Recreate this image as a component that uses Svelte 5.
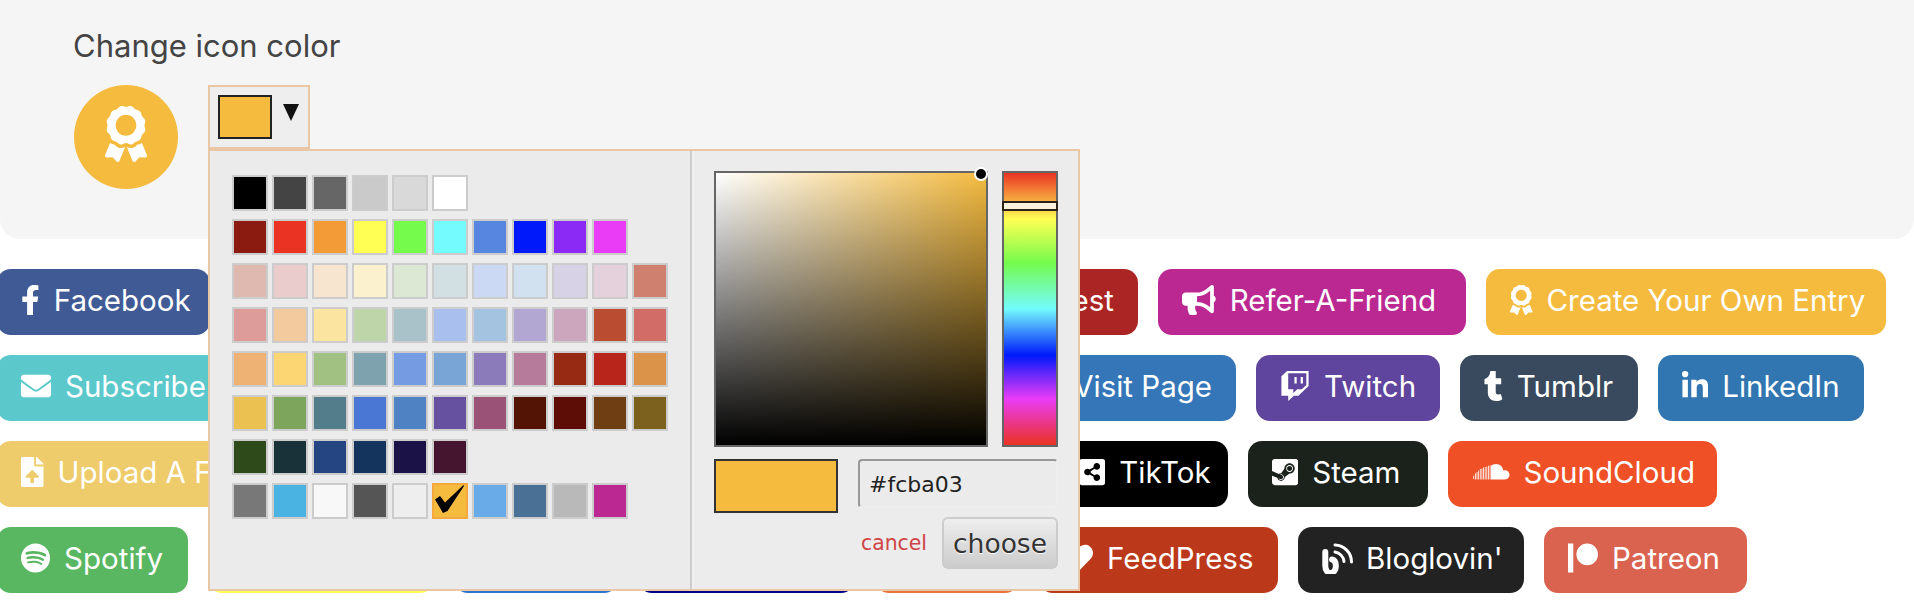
<script lang="ts">
	const award = { box: '0 0 384 512', d: 'M97.12 362.63c-8.69-8.69-4.16-6.24-25.12-11.85-9.51-2.55-17.87-7.45-25.43-13.32L1.2 448.7c-4.39 10.77 3.81 22.47 15.43 22.03l52.69-2.01L105.56 507c8 8.44 22.04 5.81 26.43-4.96l52.05-127.62c-10.84 6.04-22.87 9.58-35.31 9.58-19.5 0-37.82-7.59-51.61-21.37zM382.8 448.7l-45.37-111.24c-7.56 5.88-15.92 10.77-25.43 13.32-21.07 5.64-16.45 3.18-25.12 11.85-13.79 13.78-32.12 21.37-51.62 21.37-12.44 0-24.47-3.55-35.31-9.58L252 502.04c4.39 10.77 18.44 13.4 26.43 4.96l36.25-38.28 52.69 2.01c11.62.44 19.82-11.27 15.43-22.03zM263 340c15.28-15.55 17.03-14.21 38.79-20.14 13.89-3.79 24.75-14.84 28.47-28.98 7.48-28.4 5.54-24.97 25.95-45.75 10.17-10.35 14.14-25.44 10.42-39.58-7.47-28.38-7.48-24.42 0-52.83 3.72-14.14-.25-29.23-10.42-39.58-20.41-20.78-18.47-17.36-25.95-45.75-3.72-14.14-14.58-25.19-28.47-28.98-27.88-7.61-24.52-5.62-44.95-26.41-10.17-10.35-25-14.4-38.89-10.61-27.87 7.6-23.98 7.61-51.9 0-13.89-3.79-28.72.25-38.89 10.61-20.41 20.78-17.05 18.8-44.94 26.41-13.89 3.79-24.75 14.84-28.47 28.98-7.47 28.39-5.54 24.97-25.95 45.75-10.17 10.35-14.15 25.44-10.42 39.58 7.47 28.36 7.48 24.4 0 52.82-3.72 14.14.25 29.23 10.42 39.59 20.41 20.78 18.47 17.35 25.95 45.75 3.72 14.14 14.58 25.19 28.47 28.98C104.6 325.96 106.27 325 121 340c13.23 13.47 33.84 15.88 49.74 5.82a39.676 39.676 0 0 1 42.53 0c15.89 10.06 36.5 7.65 49.73-5.82zM97.66 175.96c0-53.03 42.24-96.02 94.34-96.02s94.34 42.99 94.34 96.02-42.24 96.02-94.34 96.02-94.34-42.99-94.34-96.02z' };

	const icons: Record<string, { box: string; d: string }> = {
		award,
		facebook: { box: '0 0 320 512', d: 'M279.14 288l14.22-92.66h-88.91v-60.13c0-25.35 12.42-50.06 52.24-50.06h40.42V6.26S260.43 0 225.36 0c-73.22 0-121.08 44.38-121.08 124.72v70.62H22.89V288h81.39v224h100.17V288z' },
		envelope: { box: '0 0 512 512', d: 'M502.3 190.8c3.9-3.1 9.7-.2 9.7 4.7V400c0 26.5-21.5 48-48 48H48c-26.5 0-48-21.5-48-48V195.6c0-5 5.7-7.8 9.7-4.7 22.4 17.4 52.1 39.5 154.1 113.6 21.1 15.4 56.7 47.8 92.2 47.6 35.7.3 72-32.8 92.3-47.6 102-74.1 131.6-96.3 154-113.7zM256 320c23.2.4 56.6-29.2 73.4-41.4 132.7-96.3 142.8-104.7 173.4-128.7 5.8-4.5 9.2-11.5 9.2-18.9v-19c0-26.5-21.5-48-48-48H48C21.5 64 0 85.5 0 112v19c0 7.4 3.4 14.3 9.2 18.9 30.6 23.9 40.7 32.4 173.4 128.7 16.8 12.2 50.2 41.8 73.4 41.4z' },
		upload: { box: '0 0 384 512', d: 'M224 136V0H24C10.7 0 0 10.7 0 24v464c0 13.3 10.7 24 24 24h336c13.3 0 24-10.7 24-24V160H248c-13.2 0-24-10.8-24-24zm65.18 216.01H224v80c0 8.84-7.16 16-16 16h-32c-8.84 0-16-7.16-16-16v-80H94.82c-14.28 0-21.41-17.29-11.27-27.36l96.42-95.7c6.65-6.61 17.39-6.61 24.04 0l96.42 95.7c10.15 10.07 3.03 27.36-11.25 27.36zM377 105L279.1 7c-4.5-4.5-10.6-7-17-7H256v128h128v-6.1c0-6.3-2.5-12.4-7-16.9z' },
		spotify: { box: '0 0 496 512', d: 'M248 8C111.1 8 0 119.1 0 256s111.1 248 248 248 248-111.1 248-248S384.9 8 248 8zm100.7 364.9c-4.2 0-6.8-1.3-10.7-3.6-62.4-37.6-135-39.2-206.7-24.5-3.9 1-9 2.6-11.9 2.6-9.7 0-15.8-7.7-15.8-15.8 0-10.3 6.1-15.2 13.6-16.8 81.9-18.1 165.6-16.5 237 26.2 6.1 3.9 9.7 7.4 9.7 16.5s-7.1 15.4-15.2 15.4zm26.9-65.6c-5.2 0-8.7-2.3-12.3-4.2-62.5-37-155.7-51.9-238.6-29.4-4.8 1.3-7.4 2.6-11.9 2.6-10.7 0-19.4-8.7-19.4-19.4s5.2-17.8 15.5-20.7c27.8-7.8 56.2-13.6 97.8-13.6 64.9 0 127.6 16.1 177 45.5 8.1 4.8 11.3 11 11.3 19.7-.1 10.8-8.5 19.5-19.4 19.5zm31-76.2c-5.2 0-8.4-1.3-12.9-3.9-71.2-42.5-198.5-52.7-280.9-29.7-3.6 1-8.1 2.6-12.9 2.6-13.2 0-23.3-10.3-23.3-23.6 0-13.6 8.4-21.3 17.4-23.9 35.2-10.3 74.6-15.2 117.5-15.2 73 0 149.5 15.2 205.4 47.8 7.8 4.5 12.9 10.7 12.9 22.6 0 13.6-11 23.3-23.2 23.3z' },
		bullhorn: { box: '0 0 576 512', d: 'M576 240c0-23.63-12.95-44.04-32-55.12V32.01C544 23.26 537.02 0 512 0c-7.12 0-14.19 2.38-19.98 7.02l-85.03 68.03C364.28 109.19 310.66 128 256 128H64c-35.35 0-64 28.65-64 64v96c0 35.35 28.65 64 64 64h33.7c-1.39 10.48-2.18 21.14-2.18 32 0 39.77 9.26 77.35 25.56 110.94 5.19 10.69 16.52 17.06 28.4 17.06h74.28c26.05 0 41.69-29.84 25.9-50.56-16.4-21.52-26.15-48.36-26.15-77.44 0-11.11 1.62-21.79 4.41-32H256c54.66 0 108.28 18.81 150.98 52.95l85.03 68.03a32.023 32.023 0 0 0 19.98 7.02c24.92 0 32-22.78 32-32V295.13C563.05 284.04 576 263.63 576 240zm-96 141.42l-33.05-26.44C392.95 311.78 325.12 288 256 288v-96c69.12 0 136.95-23.78 190.95-66.98L480 98.58v282.84z' },
		twitch: { box: '0 0 512 512', d: 'M391.17,103.47H352.54v109.7h38.63ZM285,103H246.37V212.75H285ZM120.83,0,24.31,91.42V420.58H140.14V512l96.53-91.42h77.25L487.69,256V0ZM449.07,237.75l-77.22,73.12H294.61l-67.6,64v-64H140.14V36.58H449.07Z' },
		tumblr: { box: '0 0 320 512', d: 'M309.8 480.3c-13.6 14.5-50 31.7-97.4 31.7-120.8 0-147-88.8-147-140.6v-144H17.9c-5.5 0-10-4.5-10-10v-68c0-7.2 4.5-13.6 11.3-16 62-21.8 81.5-76 84.3-117.1.8-11 6.5-16.3 16.1-16.3h70.9c5.5 0 10 4.5 10 10v115.2h83c5.5 0 10 4.4 10 9.9v81.7c0 5.5-4.5 10-10 10h-83.4V360c0 34.2 23.7 53.6 68 35.8 4.8-1.9 9-3.2 12.7-2.2 3.5.9 5.8 3.4 7.4 7.9l22 64.3c1.8 5 3.3 10.6-.4 14.5z' },
		linkedin: { box: '0 0 448 512', d: 'M100.28 448H7.4V148.9h92.88zM53.79 108.1C24.09 108.1 0 83.5 0 53.8a53.79 53.79 0 0 1 107.58 0c0 29.7-24.1 54.3-53.79 54.3zM447.9 448h-92.68V302.4c0-34.7-.7-79.2-48.29-79.2-48.29 0-55.69 37.7-55.69 76.7V448h-92.78V148.9h89.08v40.8h1.3c12.4-23.5 42.69-48.3 87.88-48.3 94 0 111.28 61.9 111.28 142.3V448z' },
		share: { box: '0 0 448 512', d: 'M448 80v352c0 26.51-21.49 48-48 48H48c-26.51 0-48-21.49-48-48V80c0-26.51 21.49-48 48-48h352c26.51 0 48 21.49 48 48zM304 296c-14.562 0-27.823 5.561-37.783 14.671l-67.958-40.775a56.339 56.339 0 0 0 0-27.793l67.958-40.775C276.177 210.439 289.438 216 304 216c30.928 0 56-25.072 56-56s-25.072-56-56-56-56 25.072-56 56c0 4.797.605 9.453 1.74 13.897l-67.958 40.775C171.823 205.561 158.562 200 144 200c-30.928 0-56 25.072-56 56s25.072 56 56 56c14.562 0 27.823-5.561 37.783-14.671l67.958 40.775a56.088 56.088 0 0 0-1.74 13.897c0 30.928 25.072 56 56 56s56-25.072 56-56C360 321.072 334.928 296 304 296z' },
		steam: { box: '0 0 448 512', d: 'M185.2 356.5c7.7-18.5-1-39.7-19.6-47.4l-29.5-12.2c11.4-4.3 24.3-4.5 36.4.5 12.2 5.1 21.6 14.6 26.7 26.7 5 12.2 5 25.6-.1 37.7-10.5 25.1-39.4 37-64.6 26.5-11.6-4.8-20.4-13.6-25.4-24.2l28.5 11.8c18.6 7.8 39.9-.9 47.6-19.4zM400 32H48C21.5 32 0 53.5 0 80v160.7l116.6 48.1c12-8.2 26.2-12.1 40.7-11.3l55.4-80.2v-1.1c0-48.2 39.3-87.5 87.6-87.5s87.6 39.3 87.6 87.5c0 49.2-40.9 88.7-89.6 87.5l-79 56.3c1.6 38.5-29.1 68.8-65.7 68.8-31.8 0-58.5-22.7-64.5-52.7L0 319.2V432c0 26.5 21.5 48 48 48h352c26.5 0 48-21.5 48-48V80c0-26.5-21.5-48-48-48zm-99.7 222.5c-32.2 0-58.4-26.1-58.4-58.3s26.2-58.3 58.4-58.3 58.4 26.2 58.4 58.3-26.2 58.3-58.4 58.3zm.1-14.6c24.2 0 43.9-19.6 43.9-43.8 0-24.2-19.6-43.8-43.9-43.8-24.2 0-43.9 19.6-43.9 43.8 0 24.2 19.7 43.8 43.9 43.8z' },
		soundcloud: { box: '0 0 640 512', d: 'M325 384V150C345 130 375 118 410 118C475 118 525 165 535 230C545 226 555 224 565 224C606 224 640 258 640 304C640 348 606 384 565 384ZM22 320h14v54h-14zM50 276h14v108h-14zM78 254h14v130h-14zM106 232h14v152h-14zM134 206h14v178h-14zM162 196h14v188h-14zM190 178h14v206h-14zM218 172h14v212h-14zM246 160h14v224h-14zM274 150h14v234h-14zM302 140h14v244h-14z' },
		heart: { box: '0 0 512 512', d: 'M462.3 62.6C407.5 15.9 326 24.3 275.7 76.2L256 96.5l-19.7-20.3C186.1 24.3 104.5 15.9 49.7 62.6c-62.8 53.6-66.1 149.8-9.9 207.9l193.5 199.8c12.5 12.9 32.8 12.9 45.3 0l193.5-199.8c56.3-58.1 53-154.3-9.8-207.9z' },
		patreon: { box: '0 0 512 512', d: 'M512 194.8c0 101.3-82.4 183.8-183.8 183.8-101.7 0-184.4-82.4-184.4-183.8 0-101.6 82.7-184.3 184.4-184.3C429.6 10.5 512 93.2 512 194.8zM0 501.5h90v-491H0v491z' }
	};

	type Btn = { label: string; color: string; width: number; icon?: string; right?: boolean };

	// entries without a label sit fully behind the open picker, right ones have only their tail showing
	const rows: Btn[][] = [
		[
			{ label: 'Facebook', color: '#3f5a95', icon: 'facebook', width: 213 },
			{ label: '', color: '#55acee', width: 190 },
			{ label: '', color: '#3f729b', width: 232 },
			{ label: '', color: '#cd201f', width: 204 },
			{ label: 'Pinterest', color: '#ac2525', width: 222, right: true },
			{ label: 'Refer-A-Friend', color: '#bb2892', icon: 'bullhorn', width: 308 },
			{ label: 'Create Your Own Entry', color: '#f4bb3f', icon: 'award', width: 400 }
		],
		[
			{ label: 'Subscribe', color: '#5bc8cc', icon: 'envelope', width: 231 },
			{ label: '', color: '#e8743b', width: 360 },
			{ label: '', color: '#5865a8', width: 372 },
			{ label: 'Visit Page', color: '#3476b8', width: 216, right: true },
			{ label: 'Twitch', color: '#5f459d', icon: 'twitch', width: 184 },
			{ label: 'Tumblr', color: '#394a5e', icon: 'tumblr', width: 178 },
			{ label: 'LinkedIn', color: '#3176b1', icon: 'linkedin', width: 206 }
		],
		[
			{ label: 'Upload A File', color: '#eecb6b', icon: 'upload', width: 259 },
			{ label: '', color: '#44bbff', width: 250 },
			{ label: '', color: '#7289da', width: 250 },
			{ label: '', color: '#2f9fd8', width: 219 },
			{ label: 'TikTok', color: '#000000', icon: 'share', width: 173 },
			{ label: 'Steam', color: '#1b221b', icon: 'steam', width: 180 },
			{ label: 'SoundCloud', color: '#ef5026', icon: 'soundcloud', width: 269 }
		],
		[
			{ label: 'Spotify', color: '#59b661', icon: 'spotify', width: 191 },
			{ label: '', color: '#ffff54', width: 226 },
			{ label: '', color: '#2c74d0', width: 164 },
			{ label: '', color: '#00008b', width: 217 },
			{ label: '', color: '#e8743b', width: 144 },
			{ label: 'FeedPress', color: '#bb381a', icon: 'heart', width: 239 },
			{ label: "Bloglovin'", color: '#222222', icon: 'bloglovin', width: 226 },
			{ label: 'Patreon', color: '#da6350', icon: 'patreon', width: 203 }
		]
	];

	const swatchRows = [
		['#000000', '#444444', '#666666', '#cacaca', '#d9d9d9', '#ffffff'],
		['#8b1a10', '#ea3323', '#f39c37', '#ffff54', '#75fb4c', '#73fbfd', '#5786e0', '#0019fb', '#8c2af5', '#ea3cf7'],
		['#dfb8b0', '#ebcccc', '#f7e5d0', '#fbf1cf', '#dce8d4', '#d2dfe3', '#ccd9f4', '#d2e1f0', '#d8d2e6', '#e5d1db', '#cf806e'],
		['#dd9c9a', '#f2ca9e', '#fbe3a0', '#bed5aa', '#a9c1c8', '#a9c0ee', '#a4c3e1', '#b2a7d2', '#cba6bd', '#ba4c31', '#d26c66'],
		['#eeb274', '#fbd673', '#a0c182', '#7fa3ae', '#759ce2', '#79a5d6', '#8b7bbb', '#b67b9b', '#972a13', '#b8251a', '#db9249'],
		['#ebc252', '#7da55c', '#537d8b', '#4a77d3', '#4f82c2', '#65519f', '#9a5277', '#531405', '#5e0c06', '#6f3f13', '#7b611d'],
		['#2f4a1a', '#19323a', '#244482', '#15345d', '#1b1348', '#451530'],
		['#787878', '#4ab3e2', '#f8f8f8', '#555555', '#eeeeee', '#f4bb3f', '#69aae8', '#4a7096', '#b9b9b9', '#bb2892']
	];
	const selected = '#f4bb3f';
</script>

<section class="panel">
	<h3 class="title">Change icon color</h3>
	<div class="controls">
		<div class="circle">
			<svg viewBox={award.box} class="circle-icon"><path d={award.d} /></svg>
		</div>
		<div class="picker">
			<div class="replacer">
				<span class="preview"></span>
				<span class="caret"></span>
			</div>
			<div class="popup">
				<div class="palette">
					{#each swatchRows as row}
						<div class="swatch-row">
							{#each row as c}
								<span class="swatch" class:active={c === selected} style="background:{c}">
									{#if c === selected}
										<svg viewBox="0 0 32 32" class="check"><path d="M1 14.5 L6 11 L11 17.5 L29.5 0 L30 1 L13.5 26 L9 28 Z" /></svg>
									{/if}
								</span>
							{/each}
						</div>
					{/each}
				</div>
				<div class="chooser">
					<div class="pick-area">
						<div class="sv">
							<span class="sv-handle"></span>
						</div>
						<div class="hue">
							<span class="hue-handle"></span>
						</div>
					</div>
					<div class="value-row">
						<div class="current"></div>
						<input class="hex" value="#fcba03" readonly />
					</div>
					<div class="actions">
						<span class="cancel">cancel</span>
						<button class="choose">choose</button>
					</div>
				</div>
			</div>
		</div>
	</div>
</section>

<div class="buttons">
	{#each rows as row}
		<div class="button-row">
			{#each row as b}
				<a class="entry" class:right={b.right} style="background:{b.color};width:{b.width}px">
					{#if b.icon === 'bloglovin'}
						<svg viewBox="0 0 31 31" class="icon blog" fill="none" stroke="#fff" stroke-linecap="round">
							<path d="M3.3 9 V23 a5.3 7 0 0 0 10.6 0 C13.9 19 12.5 17 10 16.5" stroke-width="6" />
							<path d="M13 9 a11 11 0 0 1 9 9.5" stroke-width="3" />
							<path d="M13 2 a17 17 0 0 1 16.5 17" stroke-width="3" />
						</svg>
					{:else if b.icon}
						<svg viewBox={icons[b.icon].box} class="icon" style="width:{(Number(icons[b.icon].box.split(' ')[2]) / 512) * 30}px">
							<path d={icons[b.icon].d} />
						</svg>
					{/if}
					{#if b.label}<span>{b.label}</span>{/if}
				</a>
			{/each}
		</div>
	{/each}
</div>

<style>
	:global(body) {
		background: #fff;
		font-family: 'Inter', sans-serif;
		overflow: hidden;
	}

	.panel {
		background: #f5f5f5;
		height: 239px;
		box-sizing: border-box;
		padding: 28px 74px 0;
		border-radius: 0 0 20px 20px;
	}

	.title {
		margin: 0 0 0 -1px;
		font-weight: 400;
		font-size: 31px;
		line-height: 36px;
		color: #444;
	}

	.controls {
		display: flex;
		gap: 30px;
		margin-top: 21px;
	}

	.circle {
		width: 104px;
		height: 104px;
		border-radius: 50%;
		background: #f4bb3f;
		display: flex;
		align-items: center;
		justify-content: center;
	}

	.circle-icon {
		height: 56px;
		margin-bottom: 6px;
		fill: #fff;
	}

	.picker {
		position: relative;
	}

	.replacer {
		box-sizing: border-box;
		width: 102px;
		height: 64px;
		border: 2px solid #e9c6a4;
		background: #eee;
		padding: 8px;
		display: flex;
		gap: 11px;
	}

	.preview {
		box-sizing: border-box;
		width: 54px;
		height: 44px;
		background: #f4bb3f;
		border: 2px solid #222;
	}

	.caret {
		width: 0;
		height: 0;
		margin-top: 9px;
		border-left: 8.5px solid transparent;
		border-right: 8.5px solid transparent;
		border-top: 17px solid #111;
	}

	.popup {
		position: absolute;
		left: 0;
		top: 64px;
		box-sizing: border-box;
		width: 872px;
		height: 442px;
		border: 2px solid #e9c6a4;
		background: #ececec;
		display: flex;
	}

	.palette {
		box-sizing: border-box;
		padding: 24px 0 0 22px;
		background: #ebebeb;
		border-right: 2px solid #ccc;
		flex: 0 0 482px;
	}

	.swatch-row {
		display: flex;
		gap: 4px;
		margin-bottom: 8px;
	}

	.swatch {
		box-sizing: border-box;
		width: 36px;
		height: 36px;
		border: 2px solid #ccc;
		position: relative;
	}

	.swatch.active {
		border-color: #f5a93c;
	}

	.check {
		position: absolute;
		left: 0;
		top: 0;
		width: 32px;
		height: 32px;
		fill: #000;
	}

	.chooser {
		flex: 1;
		padding: 20px 20px 0 20px;
		border-left: 2px solid #f0f0f0;
	}

	.pick-area {
		display: flex;
		gap: 14px;
	}

	.sv {
		box-sizing: border-box;
		width: 274px;
		height: 276px;
		border: 2px solid #666;
		position: relative;
		background: linear-gradient(to top, #000, rgba(0, 0, 0, 0)), linear-gradient(to right, #fff, rgba(255, 255, 255, 0)), #f4bb3f;
	}

	.sv-handle {
		position: absolute;
		right: 0;
		top: -4px;
		width: 10px;
		height: 10px;
		border-radius: 50%;
		background: #000;
		box-shadow: 0 0 0 2px #fff;
	}

	.hue {
		box-sizing: border-box;
		width: 56px;
		height: 276px;
		border: 2px solid #666;
		position: relative;
		background: linear-gradient(to bottom, #ea3323 0%, #ffff54 17%, #75fb4c 33%, #73fbfd 50%, #0019fb 67%, #ea3cf7 83%, #ea3323 100%);
	}

	.hue-handle {
		position: absolute;
		box-sizing: border-box;
		left: -2px;
		right: -2px;
		top: 28px;
		height: 10px;
		background: #fcf1dc;
		border: 2px solid #2a2015;
	}

	.value-row {
		display: flex;
		gap: 20px;
		margin-top: 12px;
	}

	.current {
		box-sizing: border-box;
		width: 124px;
		height: 54px;
		background: #f4bb3f;
		border: 2px solid #333;
	}

	.hex {
		box-sizing: border-box;
		width: 200px;
		height: 49px;
		padding: 2px 0 0 9px;
		border-style: solid;
		border-width: 2px;
		border-color: #999 #eee #eee #999;
		border-radius: 4px;
		background: #ebebeb;
		font-family: 'DejaVu Sans', sans-serif;
		font-size: 22px;
		color: #222;
		outline: none;
	}

	.actions {
		display: flex;
		align-items: center;
		justify-content: flex-end;
		gap: 15px;
		margin-top: 4px;
	}

	.cancel {
		font-family: 'DejaVu Sans', sans-serif;
		font-size: 20.4px;
		color: #d04444;
	}

	.choose {
		box-sizing: border-box;
		width: 116px;
		height: 52px;
		padding: 0;
		border: 2px solid #ccc;
		border-radius: 6px;
		background: linear-gradient(to bottom, #eee, #ccc);
		font-family: 'DejaVu Sans', sans-serif;
		font-size: 26.5px;
		color: #333;
		text-shadow: 0 1px 1px #fff;
	}

	.buttons {
		margin: 30px 0 0 -3px;
		display: flex;
		flex-direction: column;
		gap: 20px;
	}

	.button-row {
		display: flex;
		gap: 20px;
	}

	.entry {
		box-sizing: border-box;
		height: 66px;
		padding: 0 24px 4px 24px;
		border-radius: 14px;
		color: #fff;
		display: flex;
		align-items: center;
		gap: 14px;
		font-size: 29.5px;
		white-space: nowrap;
		flex: none;
		overflow: hidden;
	}

	.entry.right {
		justify-content: flex-end;
	}

	.icon {
		height: 30px;
		fill: #fff;
		flex: none;
	}

	.blog {
		width: 31px;
		height: 31px;
		margin-right: -1px;
		fill: none;
	}
</style>
